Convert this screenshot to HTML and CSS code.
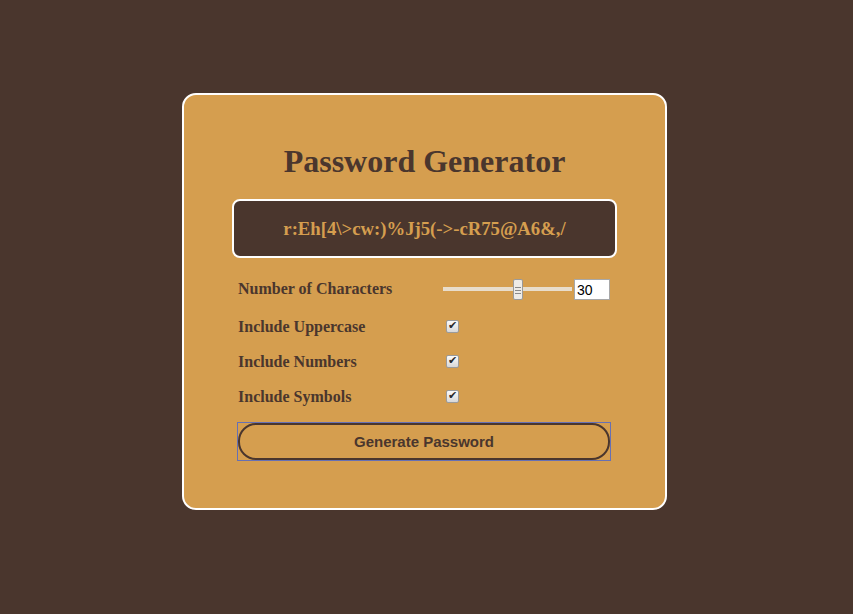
FILE: index.html
```html
<!DOCTYPE html>
<html>
<head>
<meta charset="utf-8">
<link rel="stylesheet" href="styles.css">
</head>
<body>
<div class="card">
  <h1 class="title">Password Generator</h1>
  <div class="output">r:Eh[4\&gt;cw:)%Jj5(-&gt;-cR75@A6&amp;,/</div>
  <div class="options">
    <div class="row first">
      <label class="label">Number of Characters</label>
      <div class="length">
        <input class="range" type="range" min="1" max="50" value="30">
        <input class="num" type="number" value="30">
      </div>
    </div>
    <div class="row">
      <label class="label">Include Uppercase</label>
      <input class="check" type="checkbox" checked>
    </div>
    <div class="row">
      <label class="label">Include Numbers</label>
      <input class="check" type="checkbox" checked>
    </div>
    <div class="row">
      <label class="label">Include Symbols</label>
      <input class="check" type="checkbox" checked>
    </div>
    <div class="gen-wrap">
      <button class="gen">Generate Password</button>
    </div>
  </div>
</div>
</body>
</html>
```
FILE: styles.css
```css
html, body { margin: 0; padding: 0; }
body {
  background: #4a362d;
  width: 853px;
  height: 614px;
  font-family: "Liberation Serif", serif;
}
.card {
  box-sizing: border-box;
  margin: 0 0 0 182px;
  position: relative;
  top: 93px;
  width: 485px;
  height: 417px;
  background: #d59e4f;
  border: 2px solid #fff;
  border-radius: 14px;
  padding: 48px 48px 0 48px;
  display: flex;
  flex-direction: column;
}
.card > * { flex-shrink: 0; }
.title {
  margin: 0 0 20px 0;
  text-align: center;
  font-size: 32px;
  font-weight: bold;
  color: #4a362d;
  line-height: 36px;
}
.output {
  box-sizing: border-box;
  height: 59px;
  border: 2px solid #fff;
  border-radius: 8px;
  background: #4a362d;
  color: #d59e4f;
  font-size: 18.72px;
  font-weight: bold;
  display: flex;
  align-items: center;
  justify-content: center;
}
.options {
  padding: 20px 6px 0 5px;
  display: flex;
  flex-direction: column;
}
.row {
  display: flex;
  align-items: center;
  height: 35px;
  padding: 0 1px;
}
.row.first { height: 22px; margin-bottom: 9px; }
.label {
  width: 205px;
  font-size: 16px;
  font-weight: bold;
  color: #4a362d;
}
.length { display: flex; align-items: center; }
.range {
  -webkit-appearance: none;
  appearance: none;
  width: 129px;
  height: 21px;
  margin: 0 2px 0 0;
  padding: 0;
  background: transparent;
}
.range::-webkit-slider-runnable-track {
  height: 4px;
  background: #e8ddcc;
  border: none;
}
.range::-webkit-slider-thumb {
  -webkit-appearance: none;
  appearance: none;
  box-sizing: border-box;
  width: 10px;
  height: 21px;
  margin-top: -8.5px;
  border: 1px solid #9a9a9a;
  border-radius: 2px;
  background:
    linear-gradient(#8a8a8a, #8a8a8a) center 7px / 6px 1px no-repeat,
    linear-gradient(#8a8a8a, #8a8a8a) center 10px / 6px 1px no-repeat,
    linear-gradient(#8a8a8a, #8a8a8a) center 13px / 6px 1px no-repeat,
    #eeebe7;
}
.num {
  box-sizing: border-box;
  width: 36px;
  height: 21px;
  margin: 0;
  border: 1px solid #a8a8a8;
  background: #fff;
  color: #000;
  font-family: "Liberation Sans", sans-serif;
  font-size: 14px;
  padding: 1px 1px 0 2px;
}
.num::-webkit-inner-spin-button,
.num::-webkit-outer-spin-button { -webkit-appearance: none; margin: 0; }
.check {
  -webkit-appearance: none;
  appearance: none;
  box-sizing: border-box;
  margin: 0 0 0 3px;
  width: 13px;
  height: 13px;
  border: 1px solid #9b9b9b;
  border-radius: 2px;
  background: linear-gradient(#fafafa, #d8d8d8);
  position: relative;
}
.check::after {
  content: "\2714";
  position: absolute;
  left: 1px;
  top: -2px;
  font-family: "DejaVu Sans", sans-serif;
  font-size: 11px;
  line-height: 14px;
  color: #2a2a2a;
}
.gen-wrap {
  margin-top: 8px;
  border: 1px solid #6670b4;
  display: flex;
}
.gen {
  flex: 1;
  height: 37px;
  margin: 0;
  border: 2px solid #4a362d;
  border-radius: 18px;
  background: transparent;
  color: #4a362d;
  font-family: "Liberation Sans", sans-serif;
  font-size: 15px;
  font-weight: bold;
  outline: none;
}
```
